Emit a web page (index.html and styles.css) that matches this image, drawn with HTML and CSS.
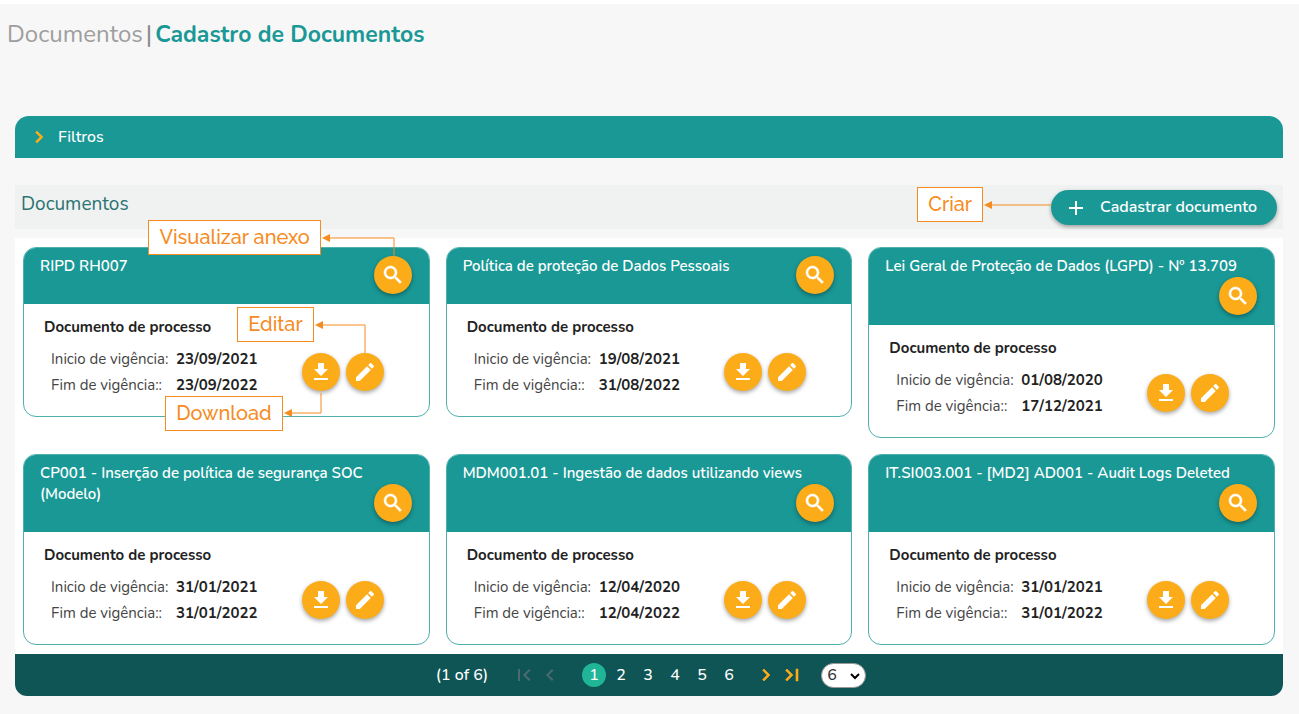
FILE: index.html
```html
<!DOCTYPE html>
<html lang="pt-BR">
<head>
<meta charset="utf-8">
<title>Cadastro de Documentos</title>
<link rel="stylesheet" href="styles.css">
</head>
<body>
<svg class="sprite" aria-hidden="true">
  <symbol id="search" viewBox="0 0 24 24"><path stroke="currentColor" stroke-width=".6" d="M15.5 14h-.79l-.28-.27A6.47 6.47 0 0 0 16 9.5 6.5 6.5 0 1 0 9.5 16c1.61 0 3.09-.59 4.23-1.57l.27.28v.79l5 4.99L20.49 19l-4.99-5zm-6 0a4.5 4.5 0 1 1 0-9 4.5 4.5 0 0 1 0 9z"/></symbol>
  <symbol id="download" viewBox="0 0 24 24"><path d="M19 9h-4V3H9v6H5l7 7 7-7zM5 18v2h14v-2H5z"/></symbol>
  <symbol id="edit" viewBox="0 0 24 24"><path d="M3 17.25V21h3.75L17.81 9.94l-3.75-3.75L3 17.25zM20.71 7.04a1 1 0 0 0 0-1.41l-2.34-2.34a1 1 0 0 0-1.41 0l-1.83 1.83 3.75 3.75 1.83-1.83z"/></symbol>
  <symbol id="add" viewBox="0 0 24 24"><path d="M19 13h-6v6h-2v-6H5v-2h6V5h2v6h6v2z"/></symbol>
  <symbol id="next" viewBox="0 0 24 24"><path stroke="currentColor" stroke-width=".6" d="M10 6 8.59 7.41 13.17 12l-4.58 4.59L10 18l6-6z"/></symbol>
  <symbol id="prev" viewBox="0 0 24 24"><path d="M15.41 7.41 14 6l-6 6 6 6 1.41-1.41L10.83 12z"/></symbol>
  <symbol id="last" viewBox="0 0 24 24"><path stroke="currentColor" stroke-width=".6" d="M5.59 7.41 10.18 12l-4.59 4.59L7 18l6-6-6-6zM16 6h2v12h-2z"/></symbol>
  <symbol id="first" viewBox="0 0 24 24"><path d="M18.41 16.59 13.82 12l4.59-4.59L17 6l-6 6 6 6zM6 6h2v12H6z"/></symbol>
</svg>

<header class="page-header">
  <h1 class="crumbs"><span class="crumb-parent">Documentos</span><span class="crumb-separator">|</span><span class="crumb-current">Cadastro de Documentos</span></h1>
</header>

<main class="content">
  <button class="filters" type="button" aria-expanded="false"><svg><use href="#next"/></svg>Filtros</button>

  <div class="toolbar">
    <h2 class="toolbar-title">Documentos</h2>
    <div class="anchor">
      <button class="create" type="button"><svg><use href="#add"/></svg>Cadastrar documento</button>
      <div class="callout callout-create"><span class="callout-label">Criar</span><svg class="callout-line" width="68" height="36" viewBox="0 0 68 36"><path d="M6 18H68"/><path class="head" d="M1 18l8-4v8z"/></svg></div>
    </div>
  </div>

  <section class="panel">
    <div class="cards">
      <article class="card">
        <header class="card-header">RIPD RH007
          <div class="anchor card-view">
            <button class="round" type="button" aria-label="Visualizar anexo"><svg><use href="#search"/></svg></button>
            <div class="callout callout-view"><span class="callout-label">Visualizar anexo</span><svg class="callout-line" width="74" height="36" viewBox="0 0 74 36"><path d="M6 18H73V36"/><path class="head" d="M1 18l8-4v8z"/></svg></div>
          </div>
        </header>
        <div class="card-body">
          <h3 class="card-type">Documento de processo</h3>
          <div class="card-row">
            <dl class="dates"><dt>Inicio de vigência:</dt><dd>23/09/2021</dd><dt>Fim de vigência::</dt><dd>23/09/2022</dd></dl>
            <div class="actions">
              <div class="anchor">
                <button class="round" type="button" aria-label="Download"><svg><use href="#download"/></svg></button>
                <div class="callout callout-download"><span class="callout-label">Download</span><svg class="callout-line" width="40" height="40" viewBox="0 0 40 40"><path d="M6 22H38V2"/><path class="head" d="M1 22l8-4v8z"/></svg></div>
              </div>
              <div class="anchor">
                <button class="round" type="button" aria-label="Editar"><svg><use href="#edit"/></svg></button>
                <div class="callout callout-edit"><span class="callout-label">Editar</span><svg class="callout-line" width="52" height="46" viewBox="0 0 52 46"><path d="M6 18H51V46"/><path class="head" d="M1 18l8-4v8z"/></svg></div>
              </div>
            </div>
          </div>
        </div>
      </article>

      <article class="card">
        <header class="card-header">Política de proteção de Dados Pessoais
          <button class="round card-view" type="button" aria-label="Visualizar anexo"><svg><use href="#search"/></svg></button>
        </header>
        <div class="card-body">
          <h3 class="card-type">Documento de processo</h3>
          <div class="card-row">
            <dl class="dates"><dt>Inicio de vigência:</dt><dd>19/08/2021</dd><dt>Fim de vigência::</dt><dd>31/08/2022</dd></dl>
            <div class="actions">
              <button class="round" type="button" aria-label="Download"><svg><use href="#download"/></svg></button>
              <button class="round" type="button" aria-label="Editar"><svg><use href="#edit"/></svg></button>
            </div>
          </div>
        </div>
      </article>

      <article class="card">
        <header class="card-header">Lei Geral de Proteção de Dados (LGPD) - Nº 13.709
          <button class="round card-view" type="button" aria-label="Visualizar anexo"><svg><use href="#search"/></svg></button>
        </header>
        <div class="card-body">
          <h3 class="card-type">Documento de processo</h3>
          <div class="card-row">
            <dl class="dates"><dt>Inicio de vigência:</dt><dd>01/08/2020</dd><dt>Fim de vigência::</dt><dd>17/12/2021</dd></dl>
            <div class="actions">
              <button class="round" type="button" aria-label="Download"><svg><use href="#download"/></svg></button>
              <button class="round" type="button" aria-label="Editar"><svg><use href="#edit"/></svg></button>
            </div>
          </div>
        </div>
      </article>

      <article class="card">
        <header class="card-header">CP001 - Inserção de política de segurança SOC (Modelo)
          <button class="round card-view" type="button" aria-label="Visualizar anexo"><svg><use href="#search"/></svg></button>
        </header>
        <div class="card-body">
          <h3 class="card-type">Documento de processo</h3>
          <div class="card-row">
            <dl class="dates"><dt>Inicio de vigência:</dt><dd>31/01/2021</dd><dt>Fim de vigência::</dt><dd>31/01/2022</dd></dl>
            <div class="actions">
              <button class="round" type="button" aria-label="Download"><svg><use href="#download"/></svg></button>
              <button class="round" type="button" aria-label="Editar"><svg><use href="#edit"/></svg></button>
            </div>
          </div>
        </div>
      </article>

      <article class="card">
        <header class="card-header">MDM001.01 - Ingestão de dados utilizando views
          <button class="round card-view" type="button" aria-label="Visualizar anexo"><svg><use href="#search"/></svg></button>
        </header>
        <div class="card-body">
          <h3 class="card-type">Documento de processo</h3>
          <div class="card-row">
            <dl class="dates"><dt>Inicio de vigência:</dt><dd>12/04/2020</dd><dt>Fim de vigência::</dt><dd>12/04/2022</dd></dl>
            <div class="actions">
              <button class="round" type="button" aria-label="Download"><svg><use href="#download"/></svg></button>
              <button class="round" type="button" aria-label="Editar"><svg><use href="#edit"/></svg></button>
            </div>
          </div>
        </div>
      </article>

      <article class="card">
        <header class="card-header">IT.SI003.001 - [MD2] AD001 - Audit Logs Deleted
          <button class="round card-view" type="button" aria-label="Visualizar anexo"><svg><use href="#search"/></svg></button>
        </header>
        <div class="card-body">
          <h3 class="card-type">Documento de processo</h3>
          <div class="card-row">
            <dl class="dates"><dt>Inicio de vigência:</dt><dd>31/01/2021</dd><dt>Fim de vigência::</dt><dd>31/01/2022</dd></dl>
            <div class="actions">
              <button class="round" type="button" aria-label="Download"><svg><use href="#download"/></svg></button>
              <button class="round" type="button" aria-label="Editar"><svg><use href="#edit"/></svg></button>
            </div>
          </div>
        </div>
      </article>
    </div>

    <nav class="pager" aria-label="Paginação">
      <span class="pager-status">(1 of 6)</span>
      <div class="pager-back">
        <button class="pager-step" type="button" aria-label="Primeira" disabled><svg><use href="#first"/></svg></button>
        <button class="pager-step" type="button" aria-label="Anterior" disabled><svg><use href="#prev"/></svg></button>
      </div>
      <div class="pager-pages">
        <button class="pager-page current" type="button" aria-current="page">1</button>
        <button class="pager-page" type="button">2</button>
        <button class="pager-page" type="button">3</button>
        <button class="pager-page" type="button">4</button>
        <button class="pager-page" type="button">5</button>
        <button class="pager-page" type="button">6</button>
      </div>
      <div class="pager-forward">
        <button class="pager-step" type="button" aria-label="Próxima"><svg><use href="#next"/></svg></button>
        <button class="pager-step" type="button" aria-label="Última"><svg><use href="#last"/></svg></button>
      </div>
      <div class="pager-size">
        <select aria-label="Itens por página"><option>6</option><option>12</option></select>
        <svg viewBox="0 0 10 8"><path d="M1 2l4 4 4-4"/></svg>
      </div>
    </nav>
  </section>
</main>
</body>
</html>
```

FILE: styles.css
```css
* { box-sizing: border-box; }
body {
  margin: 0;
  min-height: 100vh;
  background: #f7f7f7;
  border-top: 4px solid #fff;
  color: #222;
  font: 15px/21px Nunito, Lato, "Open Sans", sans-serif;
}
h1, h2, h3, dl, dd { margin: 0; }
button {
  border: 0;
  padding: 0;
  background: none;
  color: inherit;
  font: inherit;
  cursor: pointer;
}
svg { display: block; fill: currentColor; }
.sprite { position: absolute; width: 0; height: 0; }
.anchor { position: relative; }

.page-header { padding: 14px 7px; }
.crumbs {
  display: flex;
  align-items: baseline;
  gap: 3px;
  font-size: 24px;
  line-height: 32px;
  font-weight: 400;
}
.crumb-parent { color: #9e9e9e; }
.crumb-separator { color: #888; }
.crumb-current { color: #199896; font-size: 23px; font-weight: 700; }

.content { padding: 51px 16px 18px 15px; }
.filters {
  display: flex;
  align-items: center;
  gap: 7px;
  width: 100%;
  height: 42px;
  padding-left: 12px;
  border-radius: 14px 14px 0 0;
  background: #199896;
  color: #fff;
  font-size: 16px;
  font-weight: 500;
}
.filters svg { width: 24px; height: 24px; color: #fcac18; }

.toolbar {
  display: flex;
  align-items: flex-start;
  justify-content: space-between;
  margin-top: 27px;
  padding: 5px 6px 4px;
  background: #f0f2f2;
}
.toolbar-title { color: #2b7371; font-size: 19px; font-weight: 400; line-height: 28px; }
.create {
  display: flex;
  align-items: center;
  gap: 12px;
  height: 35px;
  padding: 0 20px 0 13px;
  border-radius: 18px;
  background: #199896;
  box-shadow: 0 2px 4px rgba(0, 0, 0, .35);
  color: #fff;
  font-size: 16px;
  font-weight: 600;
}
.create svg { width: 24px; height: 24px; }

.panel { margin-top: 9px; background: #fff; border-radius: 0 0 12px 12px; }
.cards {
  display: grid;
  grid-template-columns: repeat(3, 1fr);
  align-items: start;
  gap: 16px;
  padding: 9px 8px;
}
.card { border: 1px solid #4fb0ad; border-radius: 13px; }
.card-header {
  display: flow-root;
  padding: 8px 17px 10px 16px;
  border-radius: 12px 12px 0 0;
  background: #199896;
  color: #fff;
  font-weight: 600;
}
.card-view { float: right; }
.round {
  display: grid;
  place-items: center;
  width: 38px;
  height: 38px;
  border-radius: 50%;
  background: #fcac18;
  box-shadow: 0 2px 4px rgba(0, 0, 0, .35);
  color: #fff;
}
.round svg { width: 24px; height: 24px; }
.card-body { padding: 12px 45px 18px 20px; }
.card-type { font-size: 15px; font-weight: 700; line-height: 22px; }
.card-row {
  display: flex;
  align-items: center;
  justify-content: space-between;
  margin-top: 8px;
  padding-left: 7px;
}
.dates {
  display: grid;
  grid-template-columns: 125px auto;
  line-height: 26px;
}
.dates dt { color: #444; }
.dates dd { font-weight: 700; }
.actions { display: flex; gap: 6px; }

.callout {
  position: absolute;
  z-index: 1;
  display: flex;
  align-items: flex-start;
  pointer-events: none;
}
.callout-label {
  padding: 0 10px;
  border: 1px solid #f68b1f;
  background: #fff;
  color: #f68b1f;
  font: 500 20px/33px Raleway, Lato, sans-serif;
  white-space: nowrap;
}
.callout-line { flex: none; fill: none; stroke: #f68b1f; }
.callout-line .head { fill: #f68b1f; stroke: none; }
.callout-create { right: 100%; top: -3px; }
.callout-view { right: 17px; top: -36px; }
.callout-edit { right: 18px; top: -46px; }
.callout-download { right: 17px; top: 38px; align-items: flex-end; }

.pager {
  display: flex;
  align-items: center;
  justify-content: center;
  height: 42px;
  padding-left: 4px;
  border-radius: 0 0 12px 12px;
  background: #0f5555;
  color: #fff;
  font-size: 16px;
  font-weight: 500;
}
.pager-status { margin-right: 24px; }
.pager-back, .pager-forward { display: flex; gap: 2px; }
.pager-back { margin-right: 20px; }
.pager-forward { margin-right: 17px; }
.pager-pages { display: flex; gap: 3px; margin-right: 13px; }
.pager-step, .pager-page {
  display: grid;
  place-items: center;
  width: 24px;
  height: 24px;
  border-radius: 50%;
}
.pager-step { color: #fcac18; }
.pager-step:disabled { color: #4d6a73; }
.pager-step svg { width: 24px; height: 24px; }
.current { background: #1fb596; }
.pager-size { position: relative; }
.pager-size select {
  appearance: none;
  width: 45px;
  height: 25px;
  padding: 0 5px;
  border: 1px solid #999;
  border-radius: 13px;
  background: #fff;
  color: #333;
  font: inherit;
}
.pager-size svg {
  position: absolute;
  right: 6px;
  top: 9px;
  width: 10px;
  height: 8px;
  fill: none;
  stroke: #000;
  stroke-width: 2;
  pointer-events: none;
}
```
